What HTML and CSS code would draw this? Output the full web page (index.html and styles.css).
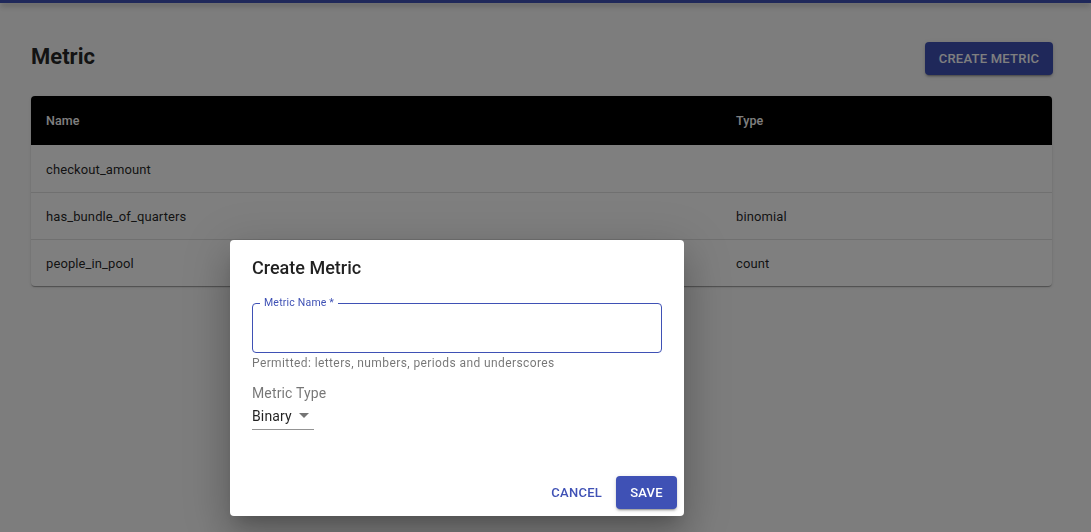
FILE: index.html
```html
<!DOCTYPE html>
<html lang="en">
<head>
<meta charset="utf-8">
<title>Metric</title>
<link rel="stylesheet" href="styles.css">
</head>
<body>
<div class="appbar"></div>
<main class="page">
  <div class="page-head">
    <h1 class="title">Metric</h1>
    <button class="btn btn-contained btn-create">Create Metric</button>
  </div>
  <div class="table">
    <div class="row head">
      <div class="cell">Name</div>
      <div class="cell">Type</div>
    </div>
    <div class="row first">
      <div class="cell">checkout_amount</div>
      <div class="cell"></div>
    </div>
    <div class="row">
      <div class="cell">has_bundle_of_quarters</div>
      <div class="cell">binomial</div>
    </div>
    <div class="row">
      <div class="cell">people_in_pool</div>
      <div class="cell">count</div>
    </div>
  </div>
</main>
<div class="backdrop"></div>
<div class="dialog" role="dialog">
  <h2 class="dialog-title">Create Metric</h2>
  <div class="field">
    <fieldset class="outline"><legend>Metric Name *</legend></fieldset>
    <input class="input" type="text" aria-label="Metric Name">
  </div>
  <div class="helper">Permitted: letters, numbers, periods and underscores</div>
  <div class="select-label">Metric Type</div>
  <div class="select">
    <span>Binary</span>
    <svg class="arrow" viewBox="0 0 24 24" width="24" height="24"><path d="M7 10l5 5 5-5z"/></svg>
  </div>
  <div class="actions">
    <button class="btn btn-text">Cancel</button>
    <button class="btn btn-contained btn-save">Save</button>
  </div>
</div>
</body>
</html>
```
FILE: styles.css
```css
* { box-sizing: border-box; }
html, body { margin: 0; }
body {
  background: #fafafa;
  font-family: Roboto, "Noto Sans", "Liberation Sans", sans-serif;
  color: rgba(0,0,0,0.87);
  width: 1091px;
  height: 532px;
  overflow: hidden;
}
.appbar {
  height: 3px;
  background: #3f51b5;
  box-shadow: 0 2px 4px -1px rgba(0,0,0,0.2), 0 4px 5px 0 rgba(0,0,0,0.14), 0 1px 10px 0 rgba(0,0,0,0.12);
}
.page { padding: 39px 38px 0 31px; }
.page-head {
  display: flex;
  align-items: center;
  justify-content: space-between;
  height: 33px;
}
.title {
  margin: 0;
  font-size: 22px;
  font-weight: 700;
  line-height: 28px;
  margin-top: -4px;
}
.btn {
  font-family: inherit;
  font-size: 13px;
  font-weight: 500;
  letter-spacing: 0.25px;
  text-transform: uppercase;
  border: 0;
  border-radius: 4px;
  height: 33px;
  cursor: pointer;
  line-height: 33px;
}
.btn-contained {
  background: #3f51b5;
  color: #fff;
  padding: 0 15px;
  box-shadow: 0 3px 1px -2px rgba(0,0,0,0.2), 0 2px 2px 0 rgba(0,0,0,0.14), 0 1px 5px 0 rgba(0,0,0,0.12);
}
.btn-create { width: 128px; padding: 0; }
.btn-save { width: 61px; padding: 0; }
.btn-text {
  background: transparent;
  color: #3f51b5;
  padding: 0 8px;
}
.table {
  margin-top: 21px;
  width: 1021px;
  background: #fff;
  border-radius: 4px;
  box-shadow: 0 2px 1px -1px rgba(0,0,0,0.2), 0 1px 1px 0 rgba(0,0,0,0.14), 0 1px 3px 0 rgba(0,0,0,0.12);
  overflow: hidden;
}
.row {
  display: grid;
  grid-template-columns: 690px 1fr;
  height: 47px;
  align-items: center;
  font-size: 13px;
  letter-spacing: 0.1px;
  border-top: 1px solid #e0e0e0;
}
.row.first { border-top: 0; padding-top: 1px; }
.row.head {
  height: 49px;
  background: #000;
  color: #fff;
  font-size: 12.5px;
  font-weight: 500;
  border-top: 0;
}
.cell { padding-left: 15px; }
.backdrop {
  position: fixed;
  inset: 0;
  background: rgba(0,0,0,0.5);
}
.dialog {
  position: absolute;
  left: 230px;
  top: 240px;
  width: 454px;
  height: 276px;
  background: #fff;
  border-radius: 4px;
  padding: 14px 22px 0 22px;
  display: flex;
  flex-direction: column;
  box-shadow: 0 11px 15px -7px rgba(0,0,0,0.2), 0 24px 38px 3px rgba(0,0,0,0.14), 0 9px 46px 8px rgba(0,0,0,0.12);
}
.dialog-title {
  margin: 0;
  font-size: 18px;
  font-weight: 500;
  line-height: 28px;
}
.field {
  position: relative;
  margin-top: 16px;
  width: 410px;
  height: 55px;
}
.outline {
  position: absolute;
  inset: 0;
  margin: 0;
  padding: 0 7px;
  border: 1.4px solid #3f51b5;
  border-radius: 4px;
}
.outline legend {
  font-size: 10.5px;
  letter-spacing: 0.2px;
  color: #3f51b5;
  padding: 0 4px;
  line-height: 10px;
}
.input {
  position: absolute;
  left: 0; right: 0; bottom: 0;
  height: 48px;
  border: 0;
  background: transparent;
  outline: none;
  padding: 0 12px;
  font: inherit;
}
.helper {
  margin-top: 3px;
  font-size: 12px;
  letter-spacing: 0.4px;
  line-height: 14px;
  color: rgba(0,0,0,0.54);
}
.select-label {
  margin-top: 15px;
  font-size: 14px;
  line-height: 16px;
  letter-spacing: 0.15px;
  color: rgba(0,0,0,0.54);
}
.select {
  display: flex;
  align-items: center;
  margin-top: 4px;
  width: 62px;
  height: 25px;
  font-size: 14px;
  letter-spacing: 0.15px;
  line-height: 20px;
  padding-bottom: 3px;
  border-bottom: 1px solid rgba(0,0,0,0.42);
}
.arrow {
  margin-left: auto;
  margin-top: -2px;
  fill: rgba(0,0,0,0.54);
  flex: none;
}
.actions {
  margin-top: auto;
  margin-right: -15px;
  padding-bottom: 7px;
  display: flex;
  justify-content: flex-end;
  align-items: center;
  gap: 6px;
}
```
